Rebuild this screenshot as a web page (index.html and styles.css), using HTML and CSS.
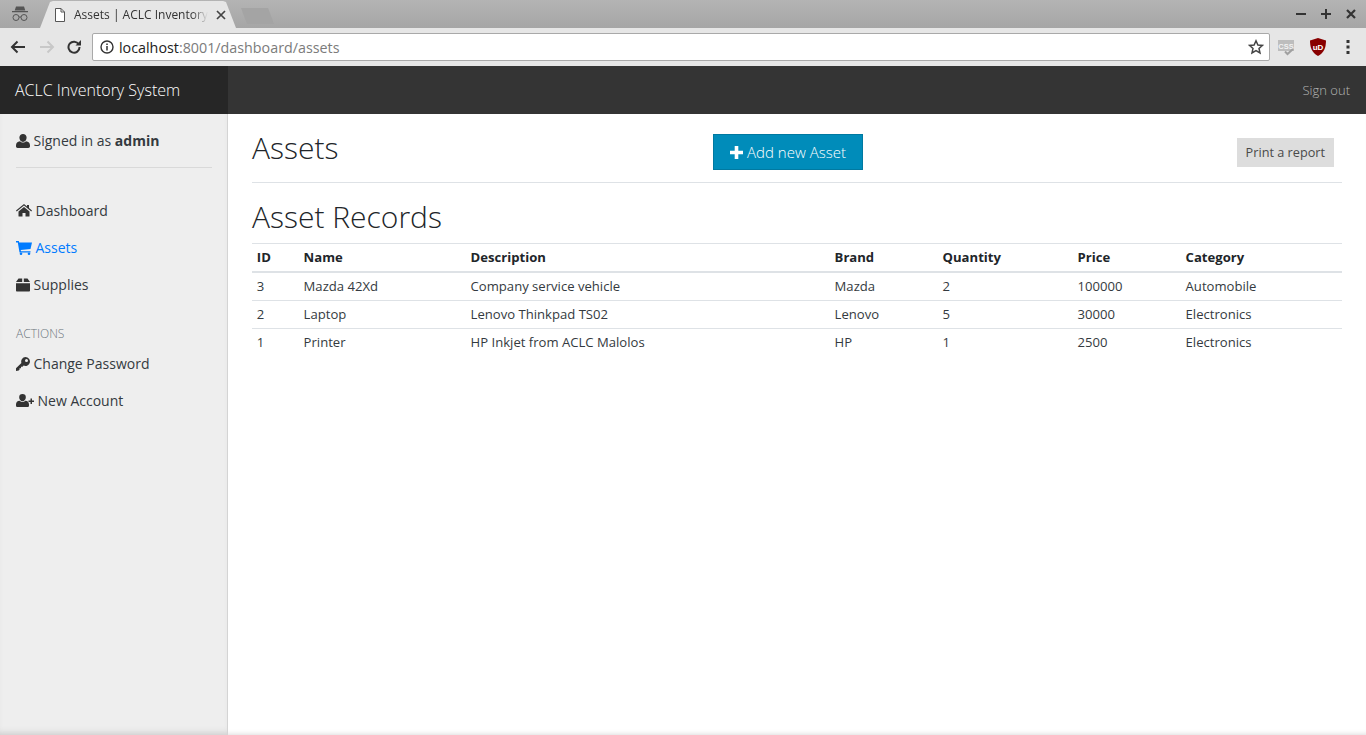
FILE: index.html
```html
<!DOCTYPE html>
<html lang="en">
<head>
<meta charset="utf-8">
<title>Assets | ACLC Inventory System</title>
<link rel="stylesheet" href="styles.css">
</head>
<body>
<div class="chrome">
  <div class="tabstrip">
    <svg class="incognito" width="18" height="16" viewBox="0 0 18 16"><path fill="#555" d="M5 0.500h8l1.300 4H3.700zM1 5h16v1.200H1z"/><g fill="none" stroke="#555" stroke-width="1"><circle cx="5" cy="11.500" r="3"/><circle cx="13" cy="11.500" r="3"/><path d="M8 11h2"/></g></svg>
    <div class="tab">
      <svg class="page-icon" width="12" height="14" viewBox="0 0 12 14"><path fill="#fff" stroke="#555" d="M1.500.5h5.500l3.500 3.500v9.500h-9z"/><path fill="none" stroke="#555" d="M7 .5v3.500h3.500"/></svg>
      <span class="tab-title">Assets | ACLC Inventory</span>
      <svg class="tab-close" width="10" height="10" viewBox="0 0 10 10"><path stroke="#444" stroke-width="1.700" d="M1 1l8 8M9 1l-8 8"/></svg>
    </div>
    <div class="newtab"></div>
    <div class="window-controls">
      <svg width="10" height="10" viewBox="0 0 10 10"><path stroke="#333" stroke-width="2" d="M0 5h10"/></svg>
      <svg width="10" height="10" viewBox="0 0 10 10"><path stroke="#333" stroke-width="2" d="M0 5h10M5 0v10"/></svg>
      <svg width="10" height="10" viewBox="0 0 10 10"><path stroke="#333" stroke-width="2.200" d="M1 1l8 8M9 1l-8 8"/></svg>
    </div>
  </div>
  <div class="toolbar">
    <svg class="tool" width="16" height="14" viewBox="0 0 16 14"><path fill="none" stroke="#333" stroke-width="2" d="M15 7H2.500M7.500 1.500L2 7l5.500 5.500"/></svg>
    <svg class="tool tool-fwd" width="16" height="14" viewBox="0 0 16 14"><path fill="none" stroke="#c8c8c8" stroke-width="2" d="M1 7h12.500M8.500 1.500L14 7l-5.500 5.500"/></svg>
    <svg class="tool tool-reload" width="14" height="14" viewBox="0 0 14 14"><path fill="none" stroke="#333" stroke-width="2" d="M11.700 4.300A5.500 5.500 0 1 0 12.500 7"/><path fill="#333" d="M8.500 5.500H14V0z"/></svg>
    <div class="omnibox">
      <svg width="14" height="14" viewBox="0 0 14 14"><circle cx="7" cy="7" r="6" fill="none" stroke="#333" stroke-width="1.400"/><path stroke="#333" stroke-width="1.500" d="M7 6v4.500M7 3.500v1.500"/></svg>
      <span class="url"><span class="host">localhost</span>:8001/dashboard/assets</span>
      <svg class="star" width="16" height="16" viewBox="0 0 16 16"><path fill="none" stroke="#444" stroke-width="1.500" d="M8 1.800l1.900 4.200 4.500.4-3.400 3 1 4.500L8 11.600l-4 2.300 1-4.500-3.400-3 4.500-.4z"/></svg>
    </div>
    <svg class="ext-css" width="16" height="17" viewBox="0 0 16 17"><path fill="#bdbdbd" d="M0 1h16v11H0z"/><text class="ext-css-label" x="8" y="9.500">CSS</text><path fill="none" stroke="#a0a0a0" stroke-width="2" d="M7 12.500l2.500 2.500L15 10"/></svg>
    <svg class="ext-ub" width="16" height="18" viewBox="0 0 16 18"><path fill="#800" d="M8 0l8 2.500c0 7-2 12.500-8 15.500C2 15 0 9.500 0 2.500z"/><text class="ext-ub-label" x="8" y="11.500">uD</text></svg>
    <svg class="kebab" width="4" height="14" viewBox="0 0 4 14"><path fill="#333" d="M0.500 0h3v3h-3zM0.500 5.500h3v3h-3zM0.500 11h3v3h-3z"/></svg>
  </div>
</div>

<header class="topbar">
  <a class="brand">ACLC Inventory System</a>
  <a class="signout">Sign out</a>
</header>

<div class="layout">
  <aside class="sidebar">
    <div class="signed-in">
      <svg class="ico" width="14" height="14" viewBox="0 0 14 14"><path fill="#333" d="M7 0a3.600 3.600 0 0 1 3.600 3.800C10.600 6 9 8 7 8S3.400 6 3.400 3.800A3.600 3.600 0 0 1 7 0zM4 7.300c.8.800 1.800 1.300 3 1.300s2.200-.5 3-1.300c2.500.2 4 1.600 4 4.200v.8c0 1-.7 1.700-1.700 1.700H1.700C.7 14 0 13.300 0 12.300v-.8c0-2.600 1.500-4 4-4.200z"/></svg>
      <span>Signed in as <b>admin</b></span>
    </div>
    <nav class="nav-main">
      <a class="nav-item">
        <svg class="ico-wide" width="16" height="13" viewBox="0 0 16 13"><path fill="#333" d="M8 3l5.500 4.500V12a.6.6 0 0 1-.6.6H9.500V9h-3v3.600H3.100a.6.6 0 0 1-.6-.6V7.500zM8 0l3 2.400V1h2v3l3 2.500-.7.900L8 1.600.7 7.400 0 6.500z"/></svg>
        <span>Dashboard</span>
      </a>
      <a class="nav-item active">
        <svg class="ico-wide" width="16" height="14" viewBox="0 0 16 14"><path fill="#007bff" d="M0 0h2.800l.4 1.500H16l-1.500 6.500-9.800 1 .3 1.200h9.500v1.300H3.500L1.800 1.400H0z"/><circle cx="5" cy="12.700" r="1.300" fill="#007bff"/><circle cx="13" cy="12.700" r="1.300" fill="#007bff"/></svg>
        <span>Assets</span>
      </a>
      <a class="nav-item">
        <svg class="ico" width="14" height="14" viewBox="0 0 14 14"><path fill="#333" d="M2.500.5h3.700v3.600H0zM7.800.5h3.700L14 4.100H7.800zM0 5.300h14v7.200c0 .6-.5 1-1 1H1c-.5 0-1-.4-1-1z"/></svg>
        <span>Supplies</span>
      </a>
    </nav>
    <div class="nav-heading">ACTIONS</div>
    <nav class="nav-actions">
      <a class="nav-item">
        <svg class="ico" width="14" height="14" viewBox="0 0 14 14"><path fill="#333" fill-rule="evenodd" d="M9.500 0A4.500 4.500 0 1 1 7.600 8.600L6.500 9.700H5v1.500H3.500v1.500L2.700 13.500 0 14v-2.700l5.400-5.400A4.500 4.500 0 0 1 9.500 0zm1 2a1.500 1.500 0 1 0 0 3 1.500 1.500 0 0 0 0-3z"/></svg>
        <span>Change Password</span>
      </a>
      <a class="nav-item">
        <svg class="ico-add" width="18" height="13" viewBox="0 0 18 13"><path fill="#333" d="M6.500 0A3.300 3.300 0 0 1 9.800 3.500C9.800 5.500 8.300 7.200 6.500 7.200S3.200 5.500 3.200 3.500A3.300 3.300 0 0 1 6.500 0zM3.700 6.700c.7.800 1.700 1.200 2.800 1.200s2.100-.4 2.800-1.200c2.300.2 3.700 1.500 3.700 3.900v.8c0 .9-.7 1.600-1.600 1.600H1.600C.7 13 0 12.300 0 11.400v-.8c0-2.400 1.400-3.700 3.700-3.900zM14.500 4.500h1.500v2h2V8h-2v2h-1.500V8h-2V6.500h2z"/></svg>
        <span>New Account</span>
      </a>
    </nav>
  </aside>

  <main class="content">
    <div class="page-head">
      <h1 class="page-title">Assets</h1>
      <a class="btn-add">
        <svg width="13" height="13" viewBox="0 0 13 13"><path fill="#fff" d="M4.700 0h3.600v4.700H13v3.600H8.300V13H4.700V8.300H0V4.700h4.700z"/></svg>
        <span>Add new Asset</span>
      </a>
      <a class="btn-print">Print a report</a>
    </div>
    <h2 class="section-title">Asset Records</h2>
    <table class="records">
      <thead>
        <tr><th class="c-id">ID</th><th class="c-name">Name</th><th class="c-desc">Description</th><th class="c-brand">Brand</th><th class="c-qty">Quantity</th><th class="c-price">Price</th><th>Category</th></tr>
      </thead>
      <tbody>
        <tr><td>3</td><td>Mazda 42Xd</td><td>Company service vehicle</td><td>Mazda</td><td>2</td><td>100000</td><td>Automobile</td></tr>
        <tr><td>2</td><td>Laptop</td><td>Lenovo Thinkpad TS02</td><td>Lenovo</td><td>5</td><td>30000</td><td>Electronics</td></tr>
        <tr class="last-row"><td>1</td><td>Printer</td><td>HP Inkjet from ACLC Malolos</td><td>HP</td><td>1</td><td>2500</td><td>Electronics</td></tr>
      </tbody>
    </table>
  </main>
</div>
</body>
</html>
```
FILE: styles.css
```css
* { box-sizing: border-box; }
html, body { margin: 0; height: 100%; }
body {
  height: 735px;
  overflow: hidden;
  display: flex;
  flex-direction: column;
  font-family: "Open Sans", "Liberation Sans", sans-serif;
  font-size: 14px;
  color: #343a40;
  background: #fff;
}
svg { display: block; flex: none; }

/* Browser frame */
.chrome { flex: none; height: 66px; display: flex; flex-direction: column; }
.tabstrip {
  height: 28px;
  display: flex;
  align-items: flex-end;
  background: linear-gradient(#b4b4b4, #a6a6a6);
  padding-left: 11px;
}
.incognito { margin-bottom: 6px; }
.tab {
  width: 196px;
  height: 27px;
  margin-left: 11px;
  padding-left: 14px;
  display: flex;
  align-items: center;
  background: #e6e6e6;
  clip-path: polygon(0 100%, 10px 4%, 13px 0, calc(100% - 13px) 0, calc(100% - 10px) 4%, 100% 100%);
}
.page-icon { margin-right: 8px; }
.tab-title {
  width: 134px;
  white-space: nowrap;
  font-size: 12px;
  color: #333;
  -webkit-mask-image: linear-gradient(90deg, #000 88%, transparent);
  mask-image: linear-gradient(90deg, #000 88%, transparent);
}
.tab-close { margin-left: 8px; }
.newtab {
  width: 33px;
  height: 16px;
  margin-left: 5px;
  margin-bottom: 4px;
  background: #a4a4a4;
  clip-path: polygon(0 0, 82% 0, 100% 100%, 18% 100%);
}
.window-controls {
  margin-left: auto;
  height: 28px;
  width: 71px;
  padding: 0 0 1px 1px;
  display: flex;
  align-items: center;
  gap: 15px;
}
.toolbar {
  height: 38px;
  display: flex;
  align-items: center;
  background: #e6e6e6;
  padding-left: 10px;
}
.tool { margin-right: 13px; }
.tool-fwd { margin-right: 12px; }
.tool-reload { margin-right: 11px; }
.omnibox {
  width: 1178px;
  height: 28px;
  display: flex;
  align-items: center;
  gap: 5px;
  padding: 0 5px 0 7px;
  background: #fff;
  border: 1px solid #a9a9a9;
  border-radius: 2px;
}
.url { font-size: 14.3px; color: #7b7b7b; white-space: nowrap; }
.host { color: #222; }
.star { margin-left: auto; }
.ext-css { margin-left: 8px; }
.ext-css-label {
  font-family: "Liberation Sans", sans-serif;
  font-size: 7.5px;
  font-weight: 700;
  fill: #f2f2f2;
  text-anchor: middle;
}
.ext-ub { margin-left: 16px; }
.ext-ub-label {
  font-family: "Liberation Sans", sans-serif;
  font-size: 8px;
  font-weight: 700;
  fill: #fff;
  text-anchor: middle;
}
.kebab { margin-left: 20px; }

/* Top bar */
.topbar {
  flex: none;
  height: 48px;
  display: flex;
  align-items: center;
  background: #343434;
}
.brand {
  width: 228px;
  height: 48px;
  padding-left: 15px;
  font-size: 16px;
  font-weight: 300;
  line-height: 48px;
  color: #fff;
  background: #262626;
}
.signout {
  margin-left: auto;
  padding-right: 16px;
  font-size: 13px;
  font-weight: 300;
  color: #b5b5b5;
}

/* Layout */
.layout { flex: 1; display: flex; min-height: 0; box-shadow: inset 0 -5px 5px -4px #ddd; }
.sidebar {
  flex: none;
  width: 228px;
  padding: 0 15px 0 16px;
  background: #eee;
  border-right: 1px solid #d4d4d4;
  box-shadow: inset 0 -6px 6px -4px #ccc;
}
.signed-in {
  height: 54px;
  display: flex;
  align-items: center;
  gap: 3.5px;
  border-bottom: 1px solid #d9d9d9;
  color: #343a40;
}
.nav-main { margin-top: 24px; }
.nav-item {
  height: 37px;
  display: flex;
  align-items: center;
  gap: 3.5px;
  color: #343a40;
}
.nav-item.active { color: #007bff; }
.nav-heading {
  margin-top: 21px;
  height: 20px;
  font-size: 12px;
  font-weight: 300;
  line-height: 20px;
  color: #6c757d;
}
.nav-actions { margin-top: 1px; }

/* Main */
.content { flex: 1; min-width: 0; padding: 0 24px; }
.page-head {
  height: 69px;
  display: flex;
  align-items: flex-start;
  border-bottom: 1px solid #dee2e6;
}
.page-title {
  margin: 14px 0 0;
  width: 461px;
  font-size: 30px;
  font-weight: 300;
  line-height: 39px;
  color: #212529;
}
.btn-add {
  width: 150px;
  height: 36px;
  margin-top: 20px;
  display: flex;
  align-items: center;
  justify-content: center;
  gap: 4px;
  font-size: 15px;
  font-weight: 300;
  color: #fff;
  background: #008cba;
  border: 1px solid #0079a1;
}
.btn-print {
  height: 29px;
  margin: 24px 8px 0 auto;
  padding: 0 9px;
  font-size: 12.7px;
  line-height: 29px;
  color: #4a4a4a;
  background: #ddd;
}
.section-title {
  margin: 16px 0 8px;
  font-size: 30px;
  font-weight: 300;
  line-height: 36px;
  color: #212529;
}
.records {
  width: 100%;
  border-collapse: separate;
  border-spacing: 0;
  table-layout: fixed;
}
.records th, .records td {
  padding: 0 4.8px 2px;
  text-align: left;
  font-size: 13.1px;
}
.records th {
  height: 30px;
  font-weight: 700;
  color: #212529;
  border-top: 1px solid #dee2e6;
  border-bottom: 2px solid #dee2e6;
}
.records td {
  height: 28px;
  color: #343a40;
  border-bottom: 1px solid #dee2e6;
}
.records .last-row td { border-bottom-color: transparent; }
.c-id { width: 46.8px; }
.c-name { width: 167px; }
.c-desc { width: 364px; }
.c-brand { width: 108px; }
.c-qty { width: 135px; }
.c-price { width: 108px; }
```
